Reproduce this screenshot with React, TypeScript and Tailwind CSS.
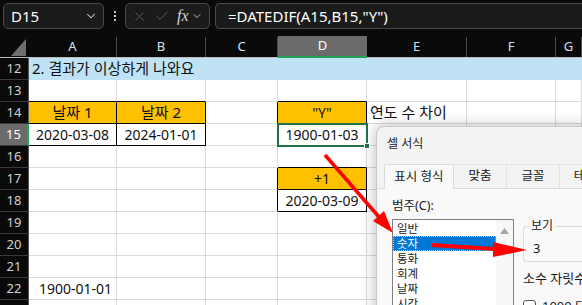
import { ChevronDown, X, Check } from 'lucide-react';

type Cell = {
  text?: string;
  fill?: 'blue' | 'orange';
  align?: 'left' | 'center' | 'right';
  boxed?: boolean;
  ko?: boolean;
};

const COLS = ['A', 'B', 'C', 'D', 'E', 'F', 'G'];
const ROWS = [12, 13, 14, 15, 16, 17, 18, 19, 20, 21, 22, 23];

const cells: Record<string, Cell> = {
  A12: { text: '2. 결과가 이상하게 나와요', fill: 'blue', align: 'left', ko: true },
  B12: { fill: 'blue' },
  C12: { fill: 'blue' },
  D12: { fill: 'blue' },
  E12: { fill: 'blue' },
  F12: { fill: 'blue' },
  G12: { fill: 'blue' },
  A14: { text: '날짜 1', fill: 'orange', align: 'center', boxed: true, ko: true },
  B14: { text: '날짜 2', fill: 'orange', align: 'center', boxed: true, ko: true },
  D14: { text: '"Y"', fill: 'orange', align: 'center', boxed: true },
  E14: { text: '연도 수 차이', align: 'left', ko: true },
  A15: { text: '2020-03-08', align: 'center', boxed: true },
  B15: { text: '2024-01-01', align: 'center', boxed: true },
  D15: { text: '1900-01-03', align: 'center', boxed: true },
  D17: { text: '+1', fill: 'orange', align: 'center', boxed: true },
  D18: { text: '2020-03-09', align: 'center', boxed: true },
  A22: { text: '1900-01-01', align: 'right' },
};

const get = (c: number, r: number): Cell => cells[`${COLS[c]}${r}`] || {};

function SheetCell({ c, r }: { c: number; r: number }) {
  const cell = get(c, r);
  const blackRight = cell.boxed || (c + 1 < COLS.length && get(c + 1, r).boxed);
  const blackBottom = cell.boxed || get(c, r + 1).boxed;

  let right = 'border-r-[#dadada]';
  let bottom = 'border-b-[#dadada]';
  if (cell.fill === 'blue') {
    right = 'border-r-[#bfe3f5]';
    bottom = 'border-b-[#bfe3f5]';
  }
  if (blackRight) right = 'border-r-black';
  if (blackBottom) bottom = 'border-b-black';

  const bg = cell.fill === 'blue' ? 'bg-[#bfe3f5]' : cell.fill === 'orange' ? 'bg-[#ffc000]' : 'bg-white';
  const align =
    cell.align === 'center' ? 'justify-center' : cell.align === 'right' ? 'justify-end pr-[4px]' : 'justify-start pl-[3px]';

  return (
    <div className={`flex items-center border-r border-b ${right} ${bottom} ${bg} ${align}`}>
      {cell.text && (
        <span
          className={`relative z-10 whitespace-nowrap text-[#111] ${cell.ko ? 'text-[15px]' : 'text-[14px]'}`}
        >
          {cell.text}
        </span>
      )}
    </div>
  );
}

export default function App() {
  return (
    <div className="relative w-[582px] h-[305px] overflow-hidden bg-white font-['Noto_Sans','Noto_Sans_CJK_KR',sans-serif]">
      {/* Formula bar */}
      <div className="h-[36px] bg-[#0a0a0a] flex items-start pt-[3px] pl-[3px]">
        <div className="w-[101px] h-[26px] rounded-[5px] border border-[#4a4a4a] bg-[#1b1b1b] flex items-center justify-between pl-[7px] pr-[5px]">
          <span className="text-[15px] text-white">D15</span>
          <ChevronDown className="w-[14px] h-[14px] text-[#cfcfcf]" strokeWidth={1.8} />
        </div>
        <div className="w-[21px] h-[26px] flex flex-col items-center justify-center gap-[2px]">
          <div className="w-[2px] h-[2px] bg-[#c8c8c8]" />
          <div className="w-[2px] h-[2px] bg-[#c8c8c8]" />
          <div className="w-[2px] h-[2px] bg-[#c8c8c8]" />
        </div>
        <div className="w-[85px] h-[26px] rounded-[5px] border border-[#4a4a4a] bg-[#1b1b1b] flex items-center pl-[6px] gap-[7px]">
          <X className="w-[15px] h-[15px] text-[#5c5c5c]" strokeWidth={1.5} />
          <Check className="w-[16px] h-[16px] text-[#5c5c5c]" strokeWidth={1.5} />
          <span className="text-[16px] italic text-[#d4d4d4] font-['Liberation_Serif',serif] leading-none">fx</span>
          <ChevronDown className="w-[12px] h-[12px] text-[#cfcfcf] -ml-[5px]" strokeWidth={1.8} />
        </div>
        <div className="ml-[5px] flex-1 h-[26px] rounded-l-[5px] border border-r-0 border-[#4a4a4a] bg-[#1b1b1b] flex items-center pl-[12px]">
          <span className="text-[15px] text-white whitespace-nowrap">=DATEDIF(A15,B15,"Y")</span>
        </div>
      </div>

      {/* Sheet */}
      <div className="grid grid-cols-[29px_88px_89px_72px_89px_100px_89px_1fr] auto-rows-[22px]">
        <div className="bg-[#0a0a0a] border-b border-b-[#bdbdbd] relative">
          <svg className="absolute left-0 top-0" width="29" height="22">
            <polygon points="11,20 26,20 26,3" fill="#6e6e6e" />
          </svg>
        </div>
        {COLS.map((col) =>
          col === 'D' ? (
            <div
              key={col}
              className="bg-[#6b6b6b] border-b-2 border-b-[#21a35a] flex items-center justify-center text-[13px] text-white"
            >
              {col}
            </div>
          ) : (
            <div key={col} className="bg-[#0a0a0a] border-b border-b-[#bdbdbd] flex items-stretch">
              <div className="flex-1 flex items-center justify-center text-[13px] text-[#d6e2ea]">{col}</div>
              <div className="w-[1px] mt-[1px] bg-[#4d4d4d]" />
            </div>
          )
        )}

        {ROWS.map((r) => (
          <div key={r} className="contents">
            {r === 15 ? (
              <div className="bg-[#6b6b6b] border-r-2 border-r-[#21a35a] border-b border-b-[#3a3a3a] flex items-center justify-center text-[13px] text-white">
                {r}
              </div>
            ) : (
              <div className="bg-[#0a0a0a] border-r border-r-[#555] border-b border-b-[#3a3a3a] flex items-center justify-center text-[13px] text-[#d0d0d0]">
                {r}
              </div>
            )}
            {COLS.map((_, c) => (
              <SheetCell key={c} c={c} r={r} />
            ))}
          </div>
        ))}
      </div>

      {/* Selection D15 */}
      <div className="absolute left-[277px] top-[123px] w-[91px] h-[24px] border-2 border-[#217346] z-20" />
      <div className="absolute left-[364px] top-[143px] w-[6px] h-[6px] bg-[#217346] border border-white z-20" />

      {/* Format Cells dialog */}
      <div className="absolute left-[376px] top-[126px] w-[240px] h-[240px] z-30 rounded-tl-[8px] border border-[#c8c8c8] bg-[#f3f3f3] shadow-[0_0_14px_rgba(0,0,0,0.28)] flex flex-col">
        <div className="shrink-0 h-[33px] flex items-center pl-[10px] text-[12px] text-[#1a1a1a]">셀 서식</div>
        <div className="shrink-0 h-[5px]" />
        <div className="shrink-0 h-[24px] flex items-end pl-[7px] border-b border-b-[#d9d9d9]">
          <div className="shrink-0 w-[70px] h-[25px] -mb-[1px] bg-[#f9f9f9] border border-b-0 border-[#d9d9d9] flex items-center justify-center text-[12.5px] text-[#1a1a1a]">
            표시 형식
          </div>
          <div className="shrink-0 w-[53px] h-[24px] border-t border-r border-[#e2e2e2] bg-[#f3f3f3] flex items-center justify-center text-[12.5px] text-[#1a1a1a]">
            맞춤
          </div>
          <div className="shrink-0 w-[53px] h-[24px] border-t border-r border-[#e2e2e2] bg-[#f3f3f3] flex items-center justify-center text-[12.5px] text-[#1a1a1a]">
            글꼴
          </div>
          <div className="shrink-0 w-[62px] h-[24px] border-t border-[#e2e2e2] bg-[#f3f3f3] flex items-center justify-center text-[12.5px] text-[#1a1a1a]">
            테두리
          </div>
        </div>
        <div className="flex-1 bg-[#f9f9f9] pl-[15px] pt-[9px] flex gap-[9px]">
          <div className="flex flex-col">
            <div className="h-[17px] flex items-center text-[12.5px] text-[#1a1a1a]">범주(C):</div>
            <div className="mt-[4px] w-[122px] h-[120px] border border-[#7f7f7f] bg-white flex">
              <div className="flex-1 pt-[1px] flex flex-col">
                {['일반', '숫자', '통화', '회계', '날짜', '시간', '백분율'].map((item) =>
                  item === '숫자' ? (
                    <div
                      key={item}
                      className="h-[15px] overflow-hidden leading-[13px] bg-[#0078d7] border border-dotted border-[#9fd0ff] flex items-center pl-[3px] text-[11.5px] text-white"
                    >
                      {item}
                    </div>
                  ) : (
                    <div
                      key={item}
                      className="h-[15px] overflow-hidden leading-[15px] flex items-center pl-[4px] text-[11.5px] text-[#1a1a1a]"
                    >
                      {item}
                    </div>
                  )
                )}
              </div>
              <div className="w-[17px] bg-[#f7f7f7] flex justify-center pt-[8px]">
                <svg width="9" height="6">
                  <polygon points="0,6 4.5,0 9,6" fill="#a6a6a6" />
                </svg>
              </div>
            </div>
          </div>
          <div className="flex flex-col pt-[28px]">
            <div className="relative w-[80px] h-[36px] border border-r-0 border-[#dcdcdc] rounded-l-[3px] pl-[9px] pt-[12px] text-[13px] text-[#1a1a1a]">
              <span className="absolute left-[5px] -top-[9px] px-[2px] bg-[#f9f9f9] text-[12px] leading-[16px] text-[#1a1a1a]">
                보기
              </span>
              3
            </div>
            <div className="mt-[8px] h-[18px] flex items-center whitespace-nowrap text-[13px] text-[#1a1a1a]">소수 자릿수(D):</div>
            <div className="mt-[9px] flex items-center gap-[6px] whitespace-nowrap text-[13px] text-[#1a1a1a]">
              <div className="w-[13px] h-[13px] rounded-[3px] border border-[#555] bg-white" />
              1000 단위 구분 기호(,) 사용
            </div>
          </div>
        </div>
      </div>

      {/* Red arrows */}
      <svg className="absolute left-0 top-0 z-40 pointer-events-none" width="582" height="305">
        <line x1="325" y1="155" x2="379" y2="217" stroke="#ff0000" strokeWidth="3.5" />
        <polygon points="393,233 373,221 384,211" fill="#ff0000" />
        <line x1="432" y1="245" x2="495" y2="249" stroke="#ff0000" strokeWidth="4" />
        <polygon points="527,250 493,242 493,257" fill="#ff0000" />
      </svg>
    </div>
  );
}
